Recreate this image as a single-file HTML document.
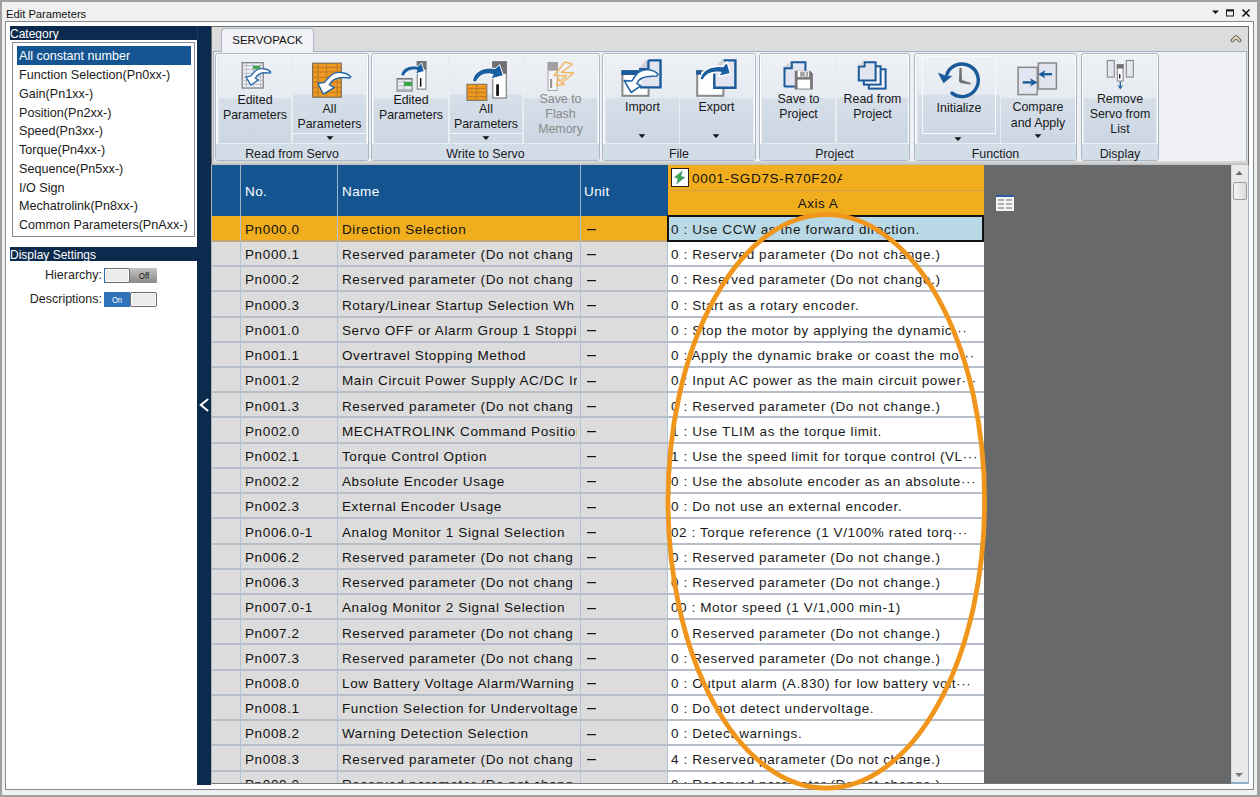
<!DOCTYPE html>
<html><head><meta charset="utf-8">
<style>
*{margin:0;padding:0;box-sizing:border-box}
html,body{width:1260px;height:797px;overflow:hidden}
body{position:relative;background:#f0f0f0;font-family:"Liberation Sans",sans-serif;color:#1a1a1a}
.a{position:absolute}
.t{position:absolute;white-space:nowrap;overflow:hidden}
</style></head><body>

<div class="a" style="left:0;top:0;width:1260px;height:797px;border:2px solid #a0a0a0;border-right-width:3px"></div>
<div class="t" style="left:6px;top:7px;font-size:11.2px;line-height:14px;color:#111">Edit Parameters</div>
<svg class="a" style="left:1205px;top:5px" width="50" height="15"><path d="M7 5.5h7l-3.5 3.5z" fill="#111"/><rect x="21.5" y="5" width="7" height="6" fill="none" stroke="#222" stroke-width="1"/><rect x="21" y="4.5" width="8" height="2" fill="#222"/><path d="M37.5 4.5l7 7M44.5 4.5l-7 7" stroke="#111" stroke-width="1.5"/></svg>
<div class="a" style="left:5px;top:21px;width:1249px;height:769px;border:1px solid #85888d;background:#fff"></div>
<div class="a" style="left:10px;top:26px;width:187px;height:14px;background:#0c2a4e"></div>
<div class="t" style="left:10px;top:27px;font-size:12px;line-height:14px;color:#fff">Category</div>
<div class="a" style="left:12px;top:42px;width:183px;height:195px;border:1px solid #858a92;background:#fff"></div>
<div class="a" style="left:17px;top:46px;width:174px;height:19px;background:#145591"></div>
<div class="t" style="left:19px;top:47.30px;font-size:12.6px;line-height:19px;color:#fff">All constant number</div>
<div class="t" style="left:19px;top:66.05px;font-size:12.6px;line-height:19px;color:#1a1a1a">Function Selection(Pn0xx-)</div>
<div class="t" style="left:19px;top:84.80px;font-size:12.6px;line-height:19px;color:#1a1a1a">Gain(Pn1xx-)</div>
<div class="t" style="left:19px;top:103.55px;font-size:12.6px;line-height:19px;color:#1a1a1a">Position(Pn2xx-)</div>
<div class="t" style="left:19px;top:122.30px;font-size:12.6px;line-height:19px;color:#1a1a1a">Speed(Pn3xx-)</div>
<div class="t" style="left:19px;top:141.05px;font-size:12.6px;line-height:19px;color:#1a1a1a">Torque(Pn4xx-)</div>
<div class="t" style="left:19px;top:159.80px;font-size:12.6px;line-height:19px;color:#1a1a1a">Sequence(Pn5xx-)</div>
<div class="t" style="left:19px;top:178.55px;font-size:12.6px;line-height:19px;color:#1a1a1a">I/O Sign</div>
<div class="t" style="left:19px;top:197.30px;font-size:12.6px;line-height:19px;color:#1a1a1a">Mechatrolink(Pn8xx-)</div>
<div class="t" style="left:19px;top:216.05px;font-size:12.6px;line-height:19px;color:#1a1a1a">Common Parameters(PnAxx-)</div>
<div class="a" style="left:10px;top:247px;width:187px;height:14px;background:#0c2a4e"></div>
<div class="t" style="left:10px;top:248px;font-size:12px;line-height:14px;color:#fff">Display Settings</div>
<div class="t" style="left:20px;top:268px;width:82px;text-align:right;font-size:12.5px;line-height:15px;color:#222">Hierarchy:</div>
<div class="t" style="left:20px;top:292px;width:82px;text-align:right;font-size:12.5px;line-height:15px;color:#222">Descriptions:</div>
<div class="a" style="left:104px;top:268px;width:53px;height:15px;background:linear-gradient(#c4c4c4,#8a8a8a)"></div>
<div class="a" style="left:104px;top:268px;width:26px;height:15px;background:#ececec;border:1px solid #6a6a6a;border-radius:2px;box-shadow:inset 0 0 0 1px #fff"></div>
<div class="a" style="left:104px;top:268px;width:1px;height:15px;background:#2a6ab8"></div>
<div class="t" style="left:131px;top:268px;width:26px;text-align:center;font-size:9.5px;line-height:15px;color:#111;transform:scaleX(0.8)">Off</div>
<div class="a" style="left:104px;top:292px;width:26px;height:15px;background:#2f72ba"></div>
<div class="a" style="left:130px;top:292px;width:27px;height:15px;background:#ececec;border:1px solid #6a6a6a;border-radius:2px;box-shadow:inset 0 0 0 1px #fff"></div>
<div class="t" style="left:104px;top:292px;width:26px;text-align:center;font-size:9.5px;line-height:15px;color:#fff;transform:scaleX(0.8)">On</div>
<div class="a" style="left:197px;top:26px;width:14px;height:759px;background:#0c2a4e"></div>
<div class="a" style="left:197px;top:26px;width:1px;height:14px;background:#1d3d60"></div>
<svg class="a" style="left:198px;top:397px" width="12" height="16"><path d="M10.2,2 L2.8,8 L10.2,14" fill="none" stroke="#fff" stroke-width="2"/></svg>
<div class="a" style="left:211px;top:26px;width:1038px;height:139px;background:#dcdcdc;border-left:1px solid #6e6e6e;border-top:1px solid #6e6e6e;border-right:1px solid #6e6e6e"></div>
<div class="a" style="left:213px;top:51px;width:1034px;height:111px;background:#eef0f4;border:1px solid #a3b2c2;border-bottom:none"></div>
<div class="a" style="left:212px;top:161px;width:1036px;height:4px;background:linear-gradient(#dedede,#bdbdbd)"></div>
<div class="a" style="left:221px;top:28px;width:93px;height:24px;background:#f1f3f6;border:1px solid #a9b6c6;border-bottom:none;border-radius:4px 4px 0 0"></div>
<div class="t" style="left:221px;top:32px;width:93px;text-align:center;font-size:11.5px;line-height:16px;color:#111">SERVOPACK</div>
<svg class="a" style="left:1229px;top:33px" width="14" height="11"><path d="M3.3,7.6 L7,3.9 L10.7,7.6" fill="none" stroke="#5c5c5c" stroke-width="3.6" stroke-linejoin="round" stroke-linecap="round"/><path d="M3.3,7.6 L7,3.9 L10.7,7.6" fill="none" stroke="#f5dcbc" stroke-width="1.5" stroke-linejoin="round" stroke-linecap="round"/></svg>
<div class="a" style="left:215px;top:53px;width:154px;height:108px;border:1px solid #a9b6c5;border-radius:3px;background:#e9edf2;box-shadow:inset 1px 1px 0 #fff,inset -1px 0 0 #fff"></div>
<div class="a" style="left:216px;top:144px;width:152px;height:16px;background:#d3dde8"></div>
<div class="t" style="left:215px;top:145px;width:154px;text-align:center;font-size:12.4px;line-height:18px;color:#1a1a1a">Read from Servo</div>
<div class="a" style="left:371px;top:53px;width:229px;height:108px;border:1px solid #a9b6c5;border-radius:3px;background:#e9edf2;box-shadow:inset 1px 1px 0 #fff,inset -1px 0 0 #fff"></div>
<div class="a" style="left:372px;top:144px;width:227px;height:16px;background:#d3dde8"></div>
<div class="t" style="left:371px;top:145px;width:229px;text-align:center;font-size:12.4px;line-height:18px;color:#1a1a1a">Write to Servo</div>
<div class="a" style="left:602px;top:53px;width:154px;height:108px;border:1px solid #a9b6c5;border-radius:3px;background:#e9edf2;box-shadow:inset 1px 1px 0 #fff,inset -1px 0 0 #fff"></div>
<div class="a" style="left:603px;top:144px;width:152px;height:16px;background:#d3dde8"></div>
<div class="t" style="left:602px;top:145px;width:154px;text-align:center;font-size:12.4px;line-height:18px;color:#1a1a1a">File</div>
<div class="a" style="left:759px;top:53px;width:151px;height:108px;border:1px solid #a9b6c5;border-radius:3px;background:#e9edf2;box-shadow:inset 1px 1px 0 #fff,inset -1px 0 0 #fff"></div>
<div class="a" style="left:760px;top:144px;width:149px;height:16px;background:#d3dde8"></div>
<div class="t" style="left:759px;top:145px;width:151px;text-align:center;font-size:12.4px;line-height:18px;color:#1a1a1a">Project</div>
<div class="a" style="left:914px;top:53px;width:163px;height:108px;border:1px solid #a9b6c5;border-radius:3px;background:#e9edf2;box-shadow:inset 1px 1px 0 #fff,inset -1px 0 0 #fff"></div>
<div class="a" style="left:915px;top:144px;width:161px;height:16px;background:#d3dde8"></div>
<div class="t" style="left:914px;top:145px;width:163px;text-align:center;font-size:12.4px;line-height:18px;color:#1a1a1a">Function</div>
<div class="a" style="left:1081px;top:53px;width:78px;height:108px;border:1px solid #a9b6c5;border-radius:3px;background:#e9edf2;box-shadow:inset 1px 1px 0 #fff,inset -1px 0 0 #fff"></div>
<div class="a" style="left:1082px;top:144px;width:76px;height:16px;background:#d3dde8"></div>
<div class="t" style="left:1081px;top:145px;width:78px;text-align:center;font-size:12.4px;line-height:18px;color:#1a1a1a">Display</div>
<div class="a" style="left:219px;top:56px;width:72px;height:87px;background:linear-gradient(#eef1f6 0%,#e6ebf1 48%,#d6dfe9 49%,#cbd6e3 100%)"></div>
<div class="t" style="left:219px;top:92.5px;width:72px;text-align:center;font-size:12.4px;line-height:15px;color:#1a1a1a">Edited<br>Parameters</div>
<div class="a" style="left:293px;top:56px;width:73px;height:87px;background:linear-gradient(#eef1f6 0%,#e6ebf1 44%,#d6dfe9 45%,#cbd6e3 100%)"></div>
<div class="t" style="left:293px;top:102px;width:73px;text-align:center;font-size:12.4px;line-height:15px;color:#1a1a1a">All<br>Parameters</div>
<div class="a" style="left:374px;top:56px;width:74px;height:87px;background:linear-gradient(#eef1f6 0%,#e6ebf1 48%,#d6dfe9 49%,#cbd6e3 100%)"></div>
<div class="t" style="left:374px;top:92.5px;width:74px;text-align:center;font-size:12.4px;line-height:15px;color:#1a1a1a">Edited<br>Parameters</div>
<div class="a" style="left:450px;top:56px;width:72px;height:87px;background:linear-gradient(#eef1f6 0%,#e6ebf1 44%,#d6dfe9 45%,#cbd6e3 100%)"></div>
<div class="t" style="left:450px;top:102px;width:72px;text-align:center;font-size:12.4px;line-height:15px;color:#1a1a1a">All<br>Parameters</div>
<div class="a" style="left:524px;top:56px;width:73px;height:87px;background:linear-gradient(#eef1f6 0%,#e6ebf1 48%,#d6dfe9 49%,#cbd6e3 100%)"></div>
<div class="t" style="left:524px;top:92px;width:73px;text-align:center;font-size:12.4px;line-height:15px;color:#8a8a8a">Save to<br>Flash<br>Memory</div>
<div class="a" style="left:606px;top:56px;width:73px;height:87px;background:linear-gradient(#eef1f6 0%,#e6ebf1 48%,#d6dfe9 49%,#cbd6e3 100%)"></div>
<div class="t" style="left:606px;top:100px;width:73px;text-align:center;font-size:12.4px;line-height:15px;color:#1a1a1a">Import</div>
<div class="a" style="left:680px;top:56px;width:73px;height:87px;background:linear-gradient(#eef1f6 0%,#e6ebf1 48%,#d6dfe9 49%,#cbd6e3 100%)"></div>
<div class="t" style="left:680px;top:100px;width:73px;text-align:center;font-size:12.4px;line-height:15px;color:#1a1a1a">Export</div>
<div class="a" style="left:762px;top:56px;width:73px;height:87px;background:linear-gradient(#eef1f6 0%,#e6ebf1 48%,#d6dfe9 49%,#cbd6e3 100%)"></div>
<div class="t" style="left:762px;top:92px;width:73px;text-align:center;font-size:12.4px;line-height:15px;color:#1a1a1a">Save to<br>Project</div>
<div class="a" style="left:837px;top:56px;width:71px;height:87px;background:linear-gradient(#eef1f6 0%,#e6ebf1 48%,#d6dfe9 49%,#cbd6e3 100%)"></div>
<div class="t" style="left:837px;top:92px;width:71px;text-align:center;font-size:12.4px;line-height:15px;color:#1a1a1a">Read from<br>Project</div>
<div class="a" style="left:918px;top:56px;width:82px;height:87px;background:linear-gradient(#eef1f6 0%,#e6ebf1 44%,#d6dfe9 45%,#cbd6e3 100%)"></div>
<div class="t" style="left:918px;top:101px;width:82px;text-align:center;font-size:12.4px;line-height:15px;color:#1a1a1a">Initialize</div>
<div class="a" style="left:1001px;top:56px;width:74px;height:87px;background:linear-gradient(#eef1f6 0%,#e6ebf1 48%,#d6dfe9 49%,#cbd6e3 100%)"></div>
<div class="t" style="left:1001px;top:99px;width:74px;text-align:center;font-size:12.4px;line-height:16px;color:#1a1a1a">Compare<br>and Apply</div>
<div class="a" style="left:1084px;top:56px;width:72px;height:87px;background:linear-gradient(#eef1f6 0%,#e6ebf1 48%,#d6dfe9 49%,#cbd6e3 100%)"></div>
<div class="t" style="left:1084px;top:92px;width:72px;text-align:center;font-size:12.4px;line-height:15px;color:#1a1a1a">Remove<br>Servo from<br>List</div>
<svg class="a" style="left:236px;top:58px" width="40" height="35" viewBox="0 0 40 35"><rect x="6.2" y="4.7" width="21" height="25.3" fill="#eef0f8" stroke="#777" stroke-width="1.2"/><line x1="10.3" y1="4.7" x2="10.3" y2="30" stroke="#b8b8c0" stroke-width="0.9"/><line x1="17.1" y1="4.7" x2="17.1" y2="30" stroke="#b8b8c0" stroke-width="0.9"/><line x1="24.4" y1="4.7" x2="24.4" y2="30" stroke="#b8b8c0" stroke-width="0.9"/><line x1="6.2" y1="7.5" x2="27.2" y2="7.5" stroke="#b8b8c0" stroke-width="0.9"/><line x1="6.2" y1="11.4" x2="27.2" y2="11.4" stroke="#b8b8c0" stroke-width="0.9"/><line x1="6.2" y1="15.4" x2="27.2" y2="15.4" stroke="#b8b8c0" stroke-width="0.9"/><line x1="6.2" y1="18.9" x2="27.2" y2="18.9" stroke="#b8b8c0" stroke-width="0.9"/><line x1="6.2" y1="22.4" x2="27.2" y2="22.4" stroke="#b8b8c0" stroke-width="0.9"/><line x1="6.2" y1="26.3" x2="27.2" y2="26.3" stroke="#b8b8c0" stroke-width="0.9"/><rect x="16.9" y="7.9" width="7" height="2.9" fill="#3aa64a"/><path d="M34.7,14 C31,10.2 23,9.2 18.8,13.3 L14.6,18.2 L9.9,18.9 L14.9,27.2 L22.3,21.9 L19.3,20.3 C21.3,16.4 25.5,13.6 34.2,15.2 Z" fill="#fff" stroke="#2468a8" stroke-width="1.3" stroke-linejoin="round"/></svg>
<svg class="a" style="left:306px;top:58px" width="50" height="42" viewBox="0 0 50 42"><rect x="6.6" y="5.2" width="28.7" height="34" fill="#f29a1e" stroke="#7a7060" stroke-width="1.2"/><line x1="12.1" y1="5.2" x2="12.1" y2="39.2" stroke="#c07e28" stroke-width="1.3"/><line x1="20.5" y1="5.2" x2="20.5" y2="39.2" stroke="#c07e28" stroke-width="1.3"/><line x1="31.1" y1="5.2" x2="31.1" y2="39.2" stroke="#c07e28" stroke-width="1.3"/><line x1="6.6" y1="9.5" x2="35.3" y2="9.5" stroke="#c07e28" stroke-width="1.3"/><line x1="6.6" y1="14" x2="35.3" y2="14" stroke="#c07e28" stroke-width="1.3"/><line x1="6.6" y1="19.5" x2="35.3" y2="19.5" stroke="#c07e28" stroke-width="1.3"/><line x1="6.6" y1="24.2" x2="35.3" y2="24.2" stroke="#c07e28" stroke-width="1.3"/><line x1="6.6" y1="29.5" x2="35.3" y2="29.5" stroke="#c07e28" stroke-width="1.3"/><line x1="6.6" y1="34.2" x2="35.3" y2="34.2" stroke="#c07e28" stroke-width="1.3"/><path d="M44.8,18.7 C40,13.8 30,12.5 24.2,18 L18.2,24.6 L11.8,25.3 L17.4,36.2 L28.4,29.3 L23.3,26.9 C25.5,22 31.5,18.3 43.7,20 Z" fill="#fff" stroke="#2468a8" stroke-width="1.4" stroke-linejoin="round"/></svg>
<svg class="a" style="left:390px;top:58px" width="40" height="35" viewBox="0 0 40 35"><rect x="7.1" y="20.6" width="15" height="12.4" fill="#eef0f8" stroke="#777" stroke-width="1.1"/><rect x="7.1" y="20" width="15" height="1.6" fill="#777"/><line x1="14" y1="20.6" x2="14" y2="33" stroke="#b0b0b8" stroke-width="0.9"/><line x1="7.1" y1="23.9" x2="22.1" y2="23.9" stroke="#b0b0b8" stroke-width="0.9"/><line x1="7.1" y1="27.9" x2="22.1" y2="27.9" stroke="#b0b0b8" stroke-width="0.9"/><line x1="7.1" y1="31.4" x2="22.1" y2="31.4" stroke="#b0b0b8" stroke-width="0.9"/><rect x="14" y="23.9" width="7.9" height="4" fill="#3aa64a"/><rect x="27.3" y="3.6" width="8.6" height="27.5" fill="#fff" stroke="#808080" stroke-width="1.1"/><rect x="26.8" y="3.1" width="9.6" height="8.5" fill="#707070"/><rect x="29.9" y="20" width="1.5" height="8.8" fill="#111"/><path d="M10.6,17.6 C11.8,10.3 19,6.5 28,8.4 L31.6,4.8 L34.2,13.5 L25.2,15.8 L27.2,12.3 C21,10.9 16,13.2 13.8,18.2 Z" fill="#1a5fa0" stroke="#fff" stroke-width="0.9" stroke-linejoin="round"/></svg>
<svg class="a" style="left:462px;top:58px" width="50" height="45" viewBox="0 0 50 45"><rect x="5" y="26.3" width="19.8" height="16" fill="#f29a1e" stroke="#7a7060" stroke-width="1.1"/><line x1="14.6" y1="26.3" x2="14.6" y2="42.3" stroke="#c07e28" stroke-width="1.3"/><line x1="5" y1="30.5" x2="24.8" y2="30.5" stroke="#c07e28" stroke-width="1.3"/><line x1="5" y1="34.5" x2="24.8" y2="34.5" stroke="#c07e28" stroke-width="1.3"/><line x1="5" y1="38.5" x2="24.8" y2="38.5" stroke="#c07e28" stroke-width="1.3"/><rect x="30.8" y="4" width="13.5" height="36" fill="#fff" stroke="#808080" stroke-width="1.2"/><rect x="30.3" y="3.4" width="14.5" height="12.4" fill="#707070"/><rect x="34.2" y="26.3" width="2.7" height="11.6" fill="#111"/><path d="M10.3,23.4 C11.8,13.3 22,8.3 33.2,10.6 L37.7,6.5 L41.4,17.6 L28.6,21 L31.2,16.5 C23,14.5 16.8,17.3 14.2,24.2 Z" fill="#1a5fa0" stroke="#fff" stroke-width="1" stroke-linejoin="round"/></svg>
<svg class="a" style="left:540px;top:58px" width="40" height="35" viewBox="0 0 40 35"><rect x="8" y="4.5" width="9.3" height="28" fill="#f4f4f6" stroke="#a8a8a8" stroke-width="1"/><rect x="7.7" y="4.2" width="9.9" height="8.5" fill="#a0a0a0"/><rect x="10.1" y="21" width="2" height="8.9" fill="#909090"/><path d="M25,4 L32.3,6.2 L21.5,14.2 L33.8,15 L21,25.2 L24.5,26.5 L16.5,27.3 L18.3,20.3 L20,23.3 L26.3,17.8 L14,17.5 Z" fill="none" stroke="#f5b050" stroke-width="1.4" stroke-linejoin="round" opacity="0.9"/></svg>
<svg class="a" style="left:616px;top:55px" width="50" height="45" viewBox="0 0 50 45"><rect x="6.4" y="16.2" width="26.2" height="24.6" fill="#fff" stroke="#888" stroke-width="2"/><rect x="5.4" y="15.2" width="18" height="4.8" fill="#1a5a9a"/><path d="M23,13.3 L31.3,4.2 L45.7,4.2 L45.7,33.6 L25.5,33.6 L25.5,20 Z" fill="#e2e4f0"/><path d="M23,13.3 L31.3,13.3 L31.3,4.2 Z" fill="#d0d0d4"/><path d="M32.4,5.4 H44.5 V32.4 H24 M23,14.2 H32.4 V5.4" fill="none" stroke="#1a5a9a" stroke-width="2.4"/><path d="M42,19.3 C37,14 28,13.2 22,17.6 C19.5,20 17.8,22.6 16,26 L8.2,25.6 L15.2,37.5 L24.8,30.8 L20.9,28.6 C22.5,23.8 27,21 40.8,21 Z" fill="#fff" stroke="#2468a8" stroke-width="1.6" stroke-linejoin="round"/></svg>
<svg class="a" style="left:690px;top:55px" width="50" height="45" viewBox="0 0 50 45"><rect x="7.2" y="16.2" width="26.2" height="24.6" fill="#fff" stroke="#888" stroke-width="2"/><rect x="6.2" y="15.2" width="5" height="4.5" fill="#1a5a9a"/><path d="M24.3,13 L32.5,4.2 L46.6,4.2 L46.6,33.9 L23.1,33.9 L23.1,18 Z" fill="#e2e4f0"/><path d="M27,10 L32.5,4.2 L32.5,10 Z" fill="#d0d0d4"/><path d="M33.6,5.4 H45.4 V32.7 H24.3 V18.6" fill="none" stroke="#1a5a9a" stroke-width="2.4"/><path d="M9.8,24.5 C11.5,15.5 20,10.3 33,11.6 L37,6.8 L40.5,18.6 L28.3,21.4 L30.8,17.4 C23,16.5 16,18.8 12.8,25.2 Z" fill="#1a5fa0" stroke="#fff" stroke-width="1.3" stroke-linejoin="round"/></svg>
<svg class="a" style="left:776px;top:55px" width="44" height="40" viewBox="0 0 44 40"><path d="M7.5,12.3 L14.8,6.3 L30.4,6.3 L30.4,32.6 L7.5,32.6 Z" fill="#e2e4f0"/><path d="M7.5,12.3 L14.8,12.3 L14.8,6.3 Z" fill="#d4d4d8"/><path d="M8.5,32 V13.3 H15.8 V7.3 H29.4 V17 M8.5,31.6 H19" fill="none" stroke="#1a5a9a" stroke-width="2"/><path d="M18.8,15.8 H34.2 L36.9,18.5 V34.6 H18.8 Z" fill="#777"/><rect x="21.6" y="24.6" width="12.5" height="9" fill="#fff"/><rect x="21.6" y="15.8" width="11.5" height="6.3" fill="#fff"/><rect x="24.1" y="16.6" width="8" height="5" fill="#a0a0a0"/><rect x="28.6" y="17.2" width="1.6" height="3.6" fill="#f0f0f0"/></svg>
<svg class="a" style="left:850px;top:55px" width="44" height="40" viewBox="0 0 44 40"><rect x="18.8" y="14.3" width="16.8" height="19.3" fill="#f4f4fa" stroke="#1a5a9a" stroke-width="2"/><rect x="13.8" y="11.3" width="16.8" height="18.3" fill="#f4f4fa" stroke="#1a5a9a" stroke-width="2"/><path d="M8.8,11.5 H14.5 V7.3 H25.6 V25.6 H8.8 Z" fill="#e2e4f0" stroke="#1a5a9a" stroke-width="2"/><path d="M7.8,10.5 L13.5,6.3 L13.5,10.5 Z" fill="#d8d8dc"/></svg>
<svg class="a" style="left:936px;top:55px" width="50" height="45" viewBox="0 0 50 45"><path d="M15.96,38.14 A16.3,16.3 0 1 0 10.68,19.73" fill="none" stroke="#1a5a9a" stroke-width="3.4" stroke-linecap="round"/><path d="M2.6,18.3 L7.6,27.8 L15.6,21.2 L10.2,21.3 Z" fill="#1a5a9a" stroke="#1a5a9a" stroke-width="0.8" stroke-linejoin="round"/><path d="M23.4,13 L25.6,13 L26,25 L35,28 L34.3,29.5 L24.5,28 L23,26.5 Z" fill="#707070"/></svg>
<svg class="a" style="left:1012px;top:55px" width="50" height="45" viewBox="0 0 50 45"><rect x="6.1" y="12.3" width="19.2" height="27.3" fill="#e2e4f0" stroke="#888" stroke-width="1.5"/><rect x="26.4" y="8" width="18" height="26" fill="#e2e4f0" stroke="#888" stroke-width="1.5"/><path d="M10.7,27.4 H22" stroke="#1a5a9a" stroke-width="2.4"/><path d="M18,23.2 L25.6,27.4 L18,31.6 L20,27.4 Z" fill="#1a5a9a"/><path d="M40,19.2 H30" stroke="#1a5a9a" stroke-width="2.4"/><path d="M33.4,15 L26.3,19.2 L33.4,23.4 L31.5,19.2 Z" fill="#1a5a9a"/></svg>
<svg class="a" style="left:1100px;top:55px" width="40" height="40" viewBox="0 0 40 40"><rect x="7.3" y="5.5" width="7" height="16.6" fill="#e4e6f0" stroke="#888" stroke-width="1.1"/><rect x="26.3" y="5.5" width="7" height="16.6" fill="#e4e6f0" stroke="#888" stroke-width="1.1"/><rect x="17.3" y="9.8" width="5.8" height="16.3" fill="#fff" stroke="#888" stroke-width="1.1"/><rect x="16.8" y="9.3" width="6.8" height="4.2" fill="#707070"/><rect x="19.1" y="19.1" width="1.3" height="4.5" fill="#111"/><path d="M20.3,26.6 V32" stroke="#2468a8" stroke-width="1.4"/><path d="M17.2,30 L20.3,34.6 L23.3,30 L20.3,31.4 Z" fill="#2468a8"/></svg>
<div class="a" style="left:293px;top:133px;width:73px;height:1px;background:#f4f6f9"></div>
<div class="a" style="left:293px;top:134px;width:73px;height:9px;background:#cfd9e5"></div>
<div class="a" style="left:450px;top:133px;width:72px;height:1px;background:#f4f6f9"></div>
<div class="a" style="left:450px;top:134px;width:72px;height:9px;background:#cfd9e5"></div>
<div class="a" style="left:922px;top:56px;width:74px;height:78px;border:1px solid #f6f8fb"></div>
<svg class="a" style="left:326px;top:136px" width="8" height="5"><path d="M0.6 0.3h6.8l-3.4 3.6z" fill="#111"/></svg>
<svg class="a" style="left:482px;top:136px" width="8" height="5"><path d="M0.6 0.3h6.8l-3.4 3.6z" fill="#111"/></svg>
<svg class="a" style="left:638px;top:134px" width="8" height="5"><path d="M0.6 0.3h6.8l-3.4 3.6z" fill="#111"/></svg>
<svg class="a" style="left:712px;top:134px" width="8" height="5"><path d="M0.6 0.3h6.8l-3.4 3.6z" fill="#111"/></svg>
<svg class="a" style="left:954px;top:137px" width="8" height="5"><path d="M0.6 0.3h6.8l-3.4 3.6z" fill="#111"/></svg>
<svg class="a" style="left:1034px;top:134px" width="8" height="5"><path d="M0.6 0.3h6.8l-3.4 3.6z" fill="#111"/></svg>
<div class="a" style="left:211px;top:165px;width:1038px;height:619px;background:#68696b"></div>
<div class="a" style="left:211px;top:165px;width:1px;height:619px;background:#b4b4b4"></div>
<div class="a" style="left:212px;top:165px;width:456px;height:51px;background:#145591"></div>
<div class="a" style="left:240px;top:165px;width:1px;height:51px;background:#9fb3c8"></div>
<div class="a" style="left:337px;top:165px;width:1px;height:51px;background:#9fb3c8"></div>
<div class="a" style="left:580px;top:165px;width:1px;height:51px;background:#9fb3c8"></div>
<div class="t" style="left:245px;top:183px;font-size:13.5px;line-height:18px;color:#fff;letter-spacing:0.4px">No.</div>
<div class="t" style="left:342px;top:183px;font-size:13.5px;line-height:18px;color:#fff;letter-spacing:0.4px">Name</div>
<div class="t" style="left:584px;top:183px;font-size:13.5px;line-height:18px;color:#fff;letter-spacing:0.4px">Unit</div>
<div class="a" style="left:668px;top:165px;width:316px;height:51px;background:#f0ae1e"></div>
<div class="a" style="left:668px;top:190px;width:316px;height:1px;background:#d4a050"></div>
<div class="a" style="left:671px;top:168px;width:18px;height:19px;background:#fff;border:1.3px solid #2a2020"></div>
<svg class="a" style="left:672px;top:169px" width="16" height="17"><path d="M10.5,1.7 L9,7.2 L13.1,8.3 L4.5,15 L6,9.6 L2.3,8.3 Z" fill="#3aa64a" stroke="#6a8ad0" stroke-width="0.4"/></svg>
<div class="t" style="left:692px;top:170px;width:150px;font-size:13.5px;line-height:18px;color:#111;letter-spacing:0.7px">0001-SGD7S-R70F20A</div>
<div class="t" style="left:668px;top:195px;width:300px;text-align:center;font-size:13.5px;line-height:18px;color:#111;letter-spacing:0.5px">Axis A</div>
<svg class="a" style="left:994px;top:194px" width="22" height="18"><rect x="2" y="1" width="18" height="16" fill="#f4f4f4"/><rect x="2" y="1" width="18" height="2" fill="#2b5aa0"/><g fill="#b0b0b0"><rect x="4" y="5" width="6" height="2"/><rect x="12" y="5" width="6" height="2"/><rect x="4" y="9" width="6" height="2"/><rect x="12" y="9" width="6" height="2"/><rect x="4" y="13" width="6" height="2"/><rect x="12" y="13" width="6" height="2"/></g></svg>
<div class="a" style="left:0;top:0;width:1260px;height:783px;overflow:hidden">
<div class="a" style="left:212px;top:216px;width:456px;height:25px;background:#f0ae1e"></div>
<div class="a" style="left:668px;top:216px;width:316px;height:25px;background:#fff"></div>
<div class="a" style="left:212px;top:241px;width:456px;height:25px;background:#dcdcdc"></div>
<div class="a" style="left:668px;top:241px;width:316px;height:25px;background:#fff"></div>
<div class="a" style="left:212px;top:266px;width:456px;height:26px;background:#dcdcdc"></div>
<div class="a" style="left:668px;top:266px;width:316px;height:26px;background:#fff"></div>
<div class="a" style="left:212px;top:292px;width:456px;height:25px;background:#dcdcdc"></div>
<div class="a" style="left:668px;top:292px;width:316px;height:25px;background:#fff"></div>
<div class="a" style="left:212px;top:317px;width:456px;height:25px;background:#dcdcdc"></div>
<div class="a" style="left:668px;top:317px;width:316px;height:25px;background:#fff"></div>
<div class="a" style="left:212px;top:342px;width:456px;height:25px;background:#dcdcdc"></div>
<div class="a" style="left:668px;top:342px;width:316px;height:25px;background:#fff"></div>
<div class="a" style="left:212px;top:367px;width:456px;height:26px;background:#dcdcdc"></div>
<div class="a" style="left:668px;top:367px;width:316px;height:26px;background:#fff"></div>
<div class="a" style="left:212px;top:393px;width:456px;height:25px;background:#dcdcdc"></div>
<div class="a" style="left:668px;top:393px;width:316px;height:25px;background:#fff"></div>
<div class="a" style="left:212px;top:418px;width:456px;height:25px;background:#dcdcdc"></div>
<div class="a" style="left:668px;top:418px;width:316px;height:25px;background:#fff"></div>
<div class="a" style="left:212px;top:443px;width:456px;height:25px;background:#dcdcdc"></div>
<div class="a" style="left:668px;top:443px;width:316px;height:25px;background:#fff"></div>
<div class="a" style="left:212px;top:468px;width:456px;height:25px;background:#dcdcdc"></div>
<div class="a" style="left:668px;top:468px;width:316px;height:25px;background:#fff"></div>
<div class="a" style="left:212px;top:493px;width:456px;height:26px;background:#dcdcdc"></div>
<div class="a" style="left:668px;top:493px;width:316px;height:26px;background:#fff"></div>
<div class="a" style="left:212px;top:519px;width:456px;height:25px;background:#dcdcdc"></div>
<div class="a" style="left:668px;top:519px;width:316px;height:25px;background:#fff"></div>
<div class="a" style="left:212px;top:544px;width:456px;height:25px;background:#dcdcdc"></div>
<div class="a" style="left:668px;top:544px;width:316px;height:25px;background:#fff"></div>
<div class="a" style="left:212px;top:569px;width:456px;height:25px;background:#dcdcdc"></div>
<div class="a" style="left:668px;top:569px;width:316px;height:25px;background:#fff"></div>
<div class="a" style="left:212px;top:594px;width:456px;height:26px;background:#dcdcdc"></div>
<div class="a" style="left:668px;top:594px;width:316px;height:26px;background:#fff"></div>
<div class="a" style="left:212px;top:620px;width:456px;height:25px;background:#dcdcdc"></div>
<div class="a" style="left:668px;top:620px;width:316px;height:25px;background:#fff"></div>
<div class="a" style="left:212px;top:645px;width:456px;height:25px;background:#dcdcdc"></div>
<div class="a" style="left:668px;top:645px;width:316px;height:25px;background:#fff"></div>
<div class="a" style="left:212px;top:670px;width:456px;height:25px;background:#dcdcdc"></div>
<div class="a" style="left:668px;top:670px;width:316px;height:25px;background:#fff"></div>
<div class="a" style="left:212px;top:695px;width:456px;height:25px;background:#dcdcdc"></div>
<div class="a" style="left:668px;top:695px;width:316px;height:25px;background:#fff"></div>
<div class="a" style="left:212px;top:720px;width:456px;height:26px;background:#dcdcdc"></div>
<div class="a" style="left:668px;top:720px;width:316px;height:26px;background:#fff"></div>
<div class="a" style="left:212px;top:746px;width:456px;height:25px;background:#dcdcdc"></div>
<div class="a" style="left:668px;top:746px;width:316px;height:25px;background:#fff"></div>
<div class="a" style="left:212px;top:771px;width:456px;height:25px;background:#dcdcdc"></div>
<div class="a" style="left:668px;top:771px;width:316px;height:25px;background:#fff"></div>
<div class="a" style="left:212px;top:240px;width:772px;height:2px;background:#c4a678"></div>
<div class="a" style="left:212px;top:265px;width:772px;height:2px;background:#b6bec9"></div>
<div class="a" style="left:212px;top:290px;width:772px;height:2px;background:#b6bec9"></div>
<div class="a" style="left:212px;top:316px;width:772px;height:2px;background:#b6bec9"></div>
<div class="a" style="left:212px;top:341px;width:772px;height:2px;background:#b6bec9"></div>
<div class="a" style="left:212px;top:366px;width:772px;height:2px;background:#b6bec9"></div>
<div class="a" style="left:212px;top:391px;width:772px;height:2px;background:#b6bec9"></div>
<div class="a" style="left:212px;top:416px;width:772px;height:2px;background:#b6bec9"></div>
<div class="a" style="left:212px;top:442px;width:772px;height:2px;background:#b6bec9"></div>
<div class="a" style="left:212px;top:467px;width:772px;height:2px;background:#b6bec9"></div>
<div class="a" style="left:212px;top:492px;width:772px;height:2px;background:#b6bec9"></div>
<div class="a" style="left:212px;top:517px;width:772px;height:2px;background:#b6bec9"></div>
<div class="a" style="left:212px;top:543px;width:772px;height:2px;background:#b6bec9"></div>
<div class="a" style="left:212px;top:568px;width:772px;height:2px;background:#b6bec9"></div>
<div class="a" style="left:212px;top:593px;width:772px;height:2px;background:#b6bec9"></div>
<div class="a" style="left:212px;top:618px;width:772px;height:2px;background:#b6bec9"></div>
<div class="a" style="left:212px;top:643px;width:772px;height:2px;background:#b6bec9"></div>
<div class="a" style="left:212px;top:669px;width:772px;height:2px;background:#b6bec9"></div>
<div class="a" style="left:212px;top:694px;width:772px;height:2px;background:#b6bec9"></div>
<div class="a" style="left:212px;top:719px;width:772px;height:2px;background:#b6bec9"></div>
<div class="a" style="left:212px;top:744px;width:772px;height:2px;background:#b6bec9"></div>
<div class="a" style="left:212px;top:770px;width:772px;height:2px;background:#b6bec9"></div>
<div class="a" style="left:212px;top:795px;width:772px;height:2px;background:#b6bec9"></div>
<div class="a" style="left:587px;top:229px;width:9px;height:1px;background:#111;box-shadow:0 0.6px 0 rgba(0,0,0,0.35)"></div>
<div class="t" style="left:245px;top:221.00px;width:92px;font-size:13.5px;line-height:18px;color:#111;letter-spacing:0.62px">Pn000.0</div>
<div class="t" style="left:342px;top:221.00px;width:235px;font-size:13.5px;line-height:18px;color:#111;letter-spacing:0.62px">Direction Selection</div>
<div class="t" style="left:671px;top:221.00px;width:311px;font-size:13.5px;line-height:18px;color:#1a1a1a;letter-spacing:0.6px">0 : Use CCW as the forward direction.</div>
<div class="a" style="left:587px;top:254px;width:9px;height:1px;background:#111;box-shadow:0 0.6px 0 rgba(0,0,0,0.35)"></div>
<div class="t" style="left:245px;top:246.22px;width:92px;font-size:13.5px;line-height:18px;color:#111;letter-spacing:0.62px">Pn000.1</div>
<div class="t" style="left:342px;top:246.22px;width:235px;font-size:13.5px;line-height:18px;color:#111;letter-spacing:0.62px">Reserved parameter (Do not chang</div>
<div class="t" style="left:671px;top:246.22px;width:311px;font-size:13.5px;line-height:18px;color:#1a1a1a;letter-spacing:0.6px">0 : Reserved parameter (Do not change.)</div>
<div class="a" style="left:587px;top:280px;width:9px;height:1px;background:#111;box-shadow:0 0.6px 0 rgba(0,0,0,0.35)"></div>
<div class="t" style="left:245px;top:271.44px;width:92px;font-size:13.5px;line-height:18px;color:#111;letter-spacing:0.62px">Pn000.2</div>
<div class="t" style="left:342px;top:271.44px;width:235px;font-size:13.5px;line-height:18px;color:#111;letter-spacing:0.62px">Reserved parameter (Do not chang</div>
<div class="t" style="left:671px;top:271.44px;width:311px;font-size:13.5px;line-height:18px;color:#1a1a1a;letter-spacing:0.6px">0 : Reserved parameter (Do not change.)</div>
<div class="a" style="left:587px;top:305px;width:9px;height:1px;background:#111;box-shadow:0 0.6px 0 rgba(0,0,0,0.35)"></div>
<div class="t" style="left:245px;top:296.66px;width:92px;font-size:13.5px;line-height:18px;color:#111;letter-spacing:0.62px">Pn000.3</div>
<div class="t" style="left:342px;top:296.66px;width:235px;font-size:13.5px;line-height:18px;color:#111;letter-spacing:0.62px">Rotary/Linear Startup Selection Wh</div>
<div class="t" style="left:671px;top:296.66px;width:311px;font-size:13.5px;line-height:18px;color:#1a1a1a;letter-spacing:0.6px">0 : Start as a rotary encoder.</div>
<div class="a" style="left:587px;top:330px;width:9px;height:1px;background:#111;box-shadow:0 0.6px 0 rgba(0,0,0,0.35)"></div>
<div class="t" style="left:245px;top:321.88px;width:92px;font-size:13.5px;line-height:18px;color:#111;letter-spacing:0.62px">Pn001.0</div>
<div class="t" style="left:342px;top:321.88px;width:235px;font-size:13.5px;line-height:18px;color:#111;letter-spacing:0.62px">Servo OFF or Alarm Group 1 Stoppi</div>
<div class="t" style="left:671px;top:321.88px;width:311px;font-size:13.5px;line-height:18px;color:#1a1a1a;letter-spacing:0.6px">0 : Stop the motor by applying the dynamic···</div>
<div class="a" style="left:587px;top:355px;width:9px;height:1px;background:#111;box-shadow:0 0.6px 0 rgba(0,0,0,0.35)"></div>
<div class="t" style="left:245px;top:347.10px;width:92px;font-size:13.5px;line-height:18px;color:#111;letter-spacing:0.62px">Pn001.1</div>
<div class="t" style="left:342px;top:347.10px;width:235px;font-size:13.5px;line-height:18px;color:#111;letter-spacing:0.62px">Overtravel Stopping Method</div>
<div class="t" style="left:671px;top:347.10px;width:311px;font-size:13.5px;line-height:18px;color:#1a1a1a;letter-spacing:0.6px">0 : Apply the dynamic brake or coast the mo···</div>
<div class="a" style="left:587px;top:381px;width:9px;height:1px;background:#111;box-shadow:0 0.6px 0 rgba(0,0,0,0.35)"></div>
<div class="t" style="left:245px;top:372.32px;width:92px;font-size:13.5px;line-height:18px;color:#111;letter-spacing:0.62px">Pn001.2</div>
<div class="t" style="left:342px;top:372.32px;width:235px;font-size:13.5px;line-height:18px;color:#111;letter-spacing:0.62px">Main Circuit Power Supply AC/DC Ir</div>
<div class="t" style="left:671px;top:372.32px;width:311px;font-size:13.5px;line-height:18px;color:#1a1a1a;letter-spacing:0.6px">0 : Input AC power as the main circuit power···</div>
<div class="a" style="left:587px;top:406px;width:9px;height:1px;background:#111;box-shadow:0 0.6px 0 rgba(0,0,0,0.35)"></div>
<div class="t" style="left:245px;top:397.54px;width:92px;font-size:13.5px;line-height:18px;color:#111;letter-spacing:0.62px">Pn001.3</div>
<div class="t" style="left:342px;top:397.54px;width:235px;font-size:13.5px;line-height:18px;color:#111;letter-spacing:0.62px">Reserved parameter (Do not chang</div>
<div class="t" style="left:671px;top:397.54px;width:311px;font-size:13.5px;line-height:18px;color:#1a1a1a;letter-spacing:0.6px">0 : Reserved parameter (Do not change.)</div>
<div class="a" style="left:587px;top:431px;width:9px;height:1px;background:#111;box-shadow:0 0.6px 0 rgba(0,0,0,0.35)"></div>
<div class="t" style="left:245px;top:422.76px;width:92px;font-size:13.5px;line-height:18px;color:#111;letter-spacing:0.62px">Pn002.0</div>
<div class="t" style="left:342px;top:422.76px;width:235px;font-size:13.5px;line-height:18px;color:#111;letter-spacing:0.62px">MECHATROLINK Command Position</div>
<div class="t" style="left:671px;top:422.76px;width:311px;font-size:13.5px;line-height:18px;color:#1a1a1a;letter-spacing:0.6px">1 : Use TLIM as the torque limit.</div>
<div class="a" style="left:587px;top:456px;width:9px;height:1px;background:#111;box-shadow:0 0.6px 0 rgba(0,0,0,0.35)"></div>
<div class="t" style="left:245px;top:447.98px;width:92px;font-size:13.5px;line-height:18px;color:#111;letter-spacing:0.62px">Pn002.1</div>
<div class="t" style="left:342px;top:447.98px;width:235px;font-size:13.5px;line-height:18px;color:#111;letter-spacing:0.62px">Torque Control Option</div>
<div class="t" style="left:671px;top:447.98px;width:311px;font-size:13.5px;line-height:18px;color:#1a1a1a;letter-spacing:0.6px">1 : Use the speed limit for torque control (VL···</div>
<div class="a" style="left:587px;top:481px;width:9px;height:1px;background:#111;box-shadow:0 0.6px 0 rgba(0,0,0,0.35)"></div>
<div class="t" style="left:245px;top:473.20px;width:92px;font-size:13.5px;line-height:18px;color:#111;letter-spacing:0.62px">Pn002.2</div>
<div class="t" style="left:342px;top:473.20px;width:235px;font-size:13.5px;line-height:18px;color:#111;letter-spacing:0.62px">Absolute Encoder Usage</div>
<div class="t" style="left:671px;top:473.20px;width:311px;font-size:13.5px;line-height:18px;color:#1a1a1a;letter-spacing:0.6px">0 : Use the absolute encoder as an absolute···</div>
<div class="a" style="left:587px;top:507px;width:9px;height:1px;background:#111;box-shadow:0 0.6px 0 rgba(0,0,0,0.35)"></div>
<div class="t" style="left:245px;top:498.42px;width:92px;font-size:13.5px;line-height:18px;color:#111;letter-spacing:0.62px">Pn002.3</div>
<div class="t" style="left:342px;top:498.42px;width:235px;font-size:13.5px;line-height:18px;color:#111;letter-spacing:0.62px">External Encoder Usage</div>
<div class="t" style="left:671px;top:498.42px;width:311px;font-size:13.5px;line-height:18px;color:#1a1a1a;letter-spacing:0.6px">0 : Do not use an external encoder.</div>
<div class="a" style="left:587px;top:532px;width:9px;height:1px;background:#111;box-shadow:0 0.6px 0 rgba(0,0,0,0.35)"></div>
<div class="t" style="left:245px;top:523.64px;width:92px;font-size:13.5px;line-height:18px;color:#111;letter-spacing:0.62px">Pn006.0-1</div>
<div class="t" style="left:342px;top:523.64px;width:235px;font-size:13.5px;line-height:18px;color:#111;letter-spacing:0.62px">Analog Monitor 1 Signal Selection</div>
<div class="t" style="left:671px;top:523.64px;width:311px;font-size:13.5px;line-height:18px;color:#1a1a1a;letter-spacing:0.6px">02 : Torque reference (1 V/100% rated torq···</div>
<div class="a" style="left:587px;top:557px;width:9px;height:1px;background:#111;box-shadow:0 0.6px 0 rgba(0,0,0,0.35)"></div>
<div class="t" style="left:245px;top:548.86px;width:92px;font-size:13.5px;line-height:18px;color:#111;letter-spacing:0.62px">Pn006.2</div>
<div class="t" style="left:342px;top:548.86px;width:235px;font-size:13.5px;line-height:18px;color:#111;letter-spacing:0.62px">Reserved parameter (Do not chang</div>
<div class="t" style="left:671px;top:548.86px;width:311px;font-size:13.5px;line-height:18px;color:#1a1a1a;letter-spacing:0.6px">0 : Reserved parameter (Do not change.)</div>
<div class="a" style="left:587px;top:582px;width:9px;height:1px;background:#111;box-shadow:0 0.6px 0 rgba(0,0,0,0.35)"></div>
<div class="t" style="left:245px;top:574.08px;width:92px;font-size:13.5px;line-height:18px;color:#111;letter-spacing:0.62px">Pn006.3</div>
<div class="t" style="left:342px;top:574.08px;width:235px;font-size:13.5px;line-height:18px;color:#111;letter-spacing:0.62px">Reserved parameter (Do not chang</div>
<div class="t" style="left:671px;top:574.08px;width:311px;font-size:13.5px;line-height:18px;color:#1a1a1a;letter-spacing:0.6px">0 : Reserved parameter (Do not change.)</div>
<div class="a" style="left:587px;top:608px;width:9px;height:1px;background:#111;box-shadow:0 0.6px 0 rgba(0,0,0,0.35)"></div>
<div class="t" style="left:245px;top:599.30px;width:92px;font-size:13.5px;line-height:18px;color:#111;letter-spacing:0.62px">Pn007.0-1</div>
<div class="t" style="left:342px;top:599.30px;width:235px;font-size:13.5px;line-height:18px;color:#111;letter-spacing:0.62px">Analog Monitor 2 Signal Selection</div>
<div class="t" style="left:671px;top:599.30px;width:311px;font-size:13.5px;line-height:18px;color:#1a1a1a;letter-spacing:0.6px">00 : Motor speed (1 V/1,000 min-1)</div>
<div class="a" style="left:587px;top:633px;width:9px;height:1px;background:#111;box-shadow:0 0.6px 0 rgba(0,0,0,0.35)"></div>
<div class="t" style="left:245px;top:624.52px;width:92px;font-size:13.5px;line-height:18px;color:#111;letter-spacing:0.62px">Pn007.2</div>
<div class="t" style="left:342px;top:624.52px;width:235px;font-size:13.5px;line-height:18px;color:#111;letter-spacing:0.62px">Reserved parameter (Do not chang</div>
<div class="t" style="left:671px;top:624.52px;width:311px;font-size:13.5px;line-height:18px;color:#1a1a1a;letter-spacing:0.6px">0 : Reserved parameter (Do not change.)</div>
<div class="a" style="left:587px;top:658px;width:9px;height:1px;background:#111;box-shadow:0 0.6px 0 rgba(0,0,0,0.35)"></div>
<div class="t" style="left:245px;top:649.74px;width:92px;font-size:13.5px;line-height:18px;color:#111;letter-spacing:0.62px">Pn007.3</div>
<div class="t" style="left:342px;top:649.74px;width:235px;font-size:13.5px;line-height:18px;color:#111;letter-spacing:0.62px">Reserved parameter (Do not chang</div>
<div class="t" style="left:671px;top:649.74px;width:311px;font-size:13.5px;line-height:18px;color:#1a1a1a;letter-spacing:0.6px">0 : Reserved parameter (Do not change.)</div>
<div class="a" style="left:587px;top:683px;width:9px;height:1px;background:#111;box-shadow:0 0.6px 0 rgba(0,0,0,0.35)"></div>
<div class="t" style="left:245px;top:674.96px;width:92px;font-size:13.5px;line-height:18px;color:#111;letter-spacing:0.62px">Pn008.0</div>
<div class="t" style="left:342px;top:674.96px;width:235px;font-size:13.5px;line-height:18px;color:#111;letter-spacing:0.62px">Low Battery Voltage Alarm/Warning</div>
<div class="t" style="left:671px;top:674.96px;width:311px;font-size:13.5px;line-height:18px;color:#1a1a1a;letter-spacing:0.6px">0 : Output alarm (A.830) for low battery volt···</div>
<div class="a" style="left:587px;top:708px;width:9px;height:1px;background:#111;box-shadow:0 0.6px 0 rgba(0,0,0,0.35)"></div>
<div class="t" style="left:245px;top:700.18px;width:92px;font-size:13.5px;line-height:18px;color:#111;letter-spacing:0.62px">Pn008.1</div>
<div class="t" style="left:342px;top:700.18px;width:235px;font-size:13.5px;line-height:18px;color:#111;letter-spacing:0.62px">Function Selection for Undervoltage</div>
<div class="t" style="left:671px;top:700.18px;width:311px;font-size:13.5px;line-height:18px;color:#1a1a1a;letter-spacing:0.6px">0 : Do not detect undervoltage.</div>
<div class="a" style="left:587px;top:734px;width:9px;height:1px;background:#111;box-shadow:0 0.6px 0 rgba(0,0,0,0.35)"></div>
<div class="t" style="left:245px;top:725.40px;width:92px;font-size:13.5px;line-height:18px;color:#111;letter-spacing:0.62px">Pn008.2</div>
<div class="t" style="left:342px;top:725.40px;width:235px;font-size:13.5px;line-height:18px;color:#111;letter-spacing:0.62px">Warning Detection Selection</div>
<div class="t" style="left:671px;top:725.40px;width:311px;font-size:13.5px;line-height:18px;color:#1a1a1a;letter-spacing:0.6px">0 : Detect warnings.</div>
<div class="a" style="left:587px;top:759px;width:9px;height:1px;background:#111;box-shadow:0 0.6px 0 rgba(0,0,0,0.35)"></div>
<div class="t" style="left:245px;top:750.62px;width:92px;font-size:13.5px;line-height:18px;color:#111;letter-spacing:0.62px">Pn008.3</div>
<div class="t" style="left:342px;top:750.62px;width:235px;font-size:13.5px;line-height:18px;color:#111;letter-spacing:0.62px">Reserved parameter (Do not chang</div>
<div class="t" style="left:671px;top:750.62px;width:311px;font-size:13.5px;line-height:18px;color:#1a1a1a;letter-spacing:0.6px">4 : Reserved parameter (Do not change.)</div>
<div class="a" style="left:587px;top:784px;width:9px;height:1px;background:#111;box-shadow:0 0.6px 0 rgba(0,0,0,0.35)"></div>
<div class="t" style="left:245px;top:775.84px;width:92px;font-size:13.5px;line-height:18px;color:#111;letter-spacing:0.62px">Pn009.0</div>
<div class="t" style="left:342px;top:775.84px;width:235px;font-size:13.5px;line-height:18px;color:#111;letter-spacing:0.62px">Reserved parameter (Do not chang</div>
<div class="t" style="left:671px;top:775.84px;width:311px;font-size:13.5px;line-height:18px;color:#1a1a1a;letter-spacing:0.6px">0 : Reserved parameter (Do not change.)</div>
</div>
<div class="a" style="left:240px;top:216px;width:1px;height:568px;background:#b3c3d6"></div>
<div class="a" style="left:337px;top:216px;width:1px;height:568px;background:#b3c3d6"></div>
<div class="a" style="left:580px;top:216px;width:1px;height:568px;background:#b3c3d6"></div>
<div class="a" style="left:667px;top:216px;width:1px;height:568px;background:#b3c3d6"></div>
<div class="a" style="left:667px;top:215px;width:317px;height:27px;border:2px solid #111;background:#b9d9e6"></div>
<div class="t" style="left:671px;top:221px;width:311px;font-size:13.5px;line-height:18px;color:#1a1a1a;letter-spacing:0.6px">0 : Use CCW as the forward direction.</div>
<div class="a" style="left:212px;top:783px;width:1019px;height:1px;background:#777"></div>
<div class="a" style="left:1231px;top:165px;width:17px;height:619px;background:#e9e9e9;border-left:1px solid #dadada"></div>
<svg class="a" style="left:1234px;top:170px" width="10" height="6"><path d="M1.5 5h7L5.5 1z" fill="#6a6a6a"/></svg>
<div class="a" style="left:1233px;top:182px;width:14px;height:18px;background:linear-gradient(90deg,#f4f4f4,#dcdcdc);border:1px solid #9a9a9a;border-radius:2px"></div>
<svg class="a" style="left:1234px;top:772px" width="10" height="6"><path d="M1 1h8L5 5z" fill="#777"/></svg>
<div class="a" style="left:1231px;top:782px;width:17px;height:2px;background:#8eb0d0"></div>
<div class="a" style="left:1248px;top:165px;width:1px;height:619px;background:#a3b3c3"></div>
<svg class="a" style="left:0;top:0" width="1260" height="797"><ellipse cx="826.3" cy="501.4" rx="158.3" ry="286.7" fill="none" stroke="#f0961c" stroke-width="4.8"/></svg>
</body></html>
